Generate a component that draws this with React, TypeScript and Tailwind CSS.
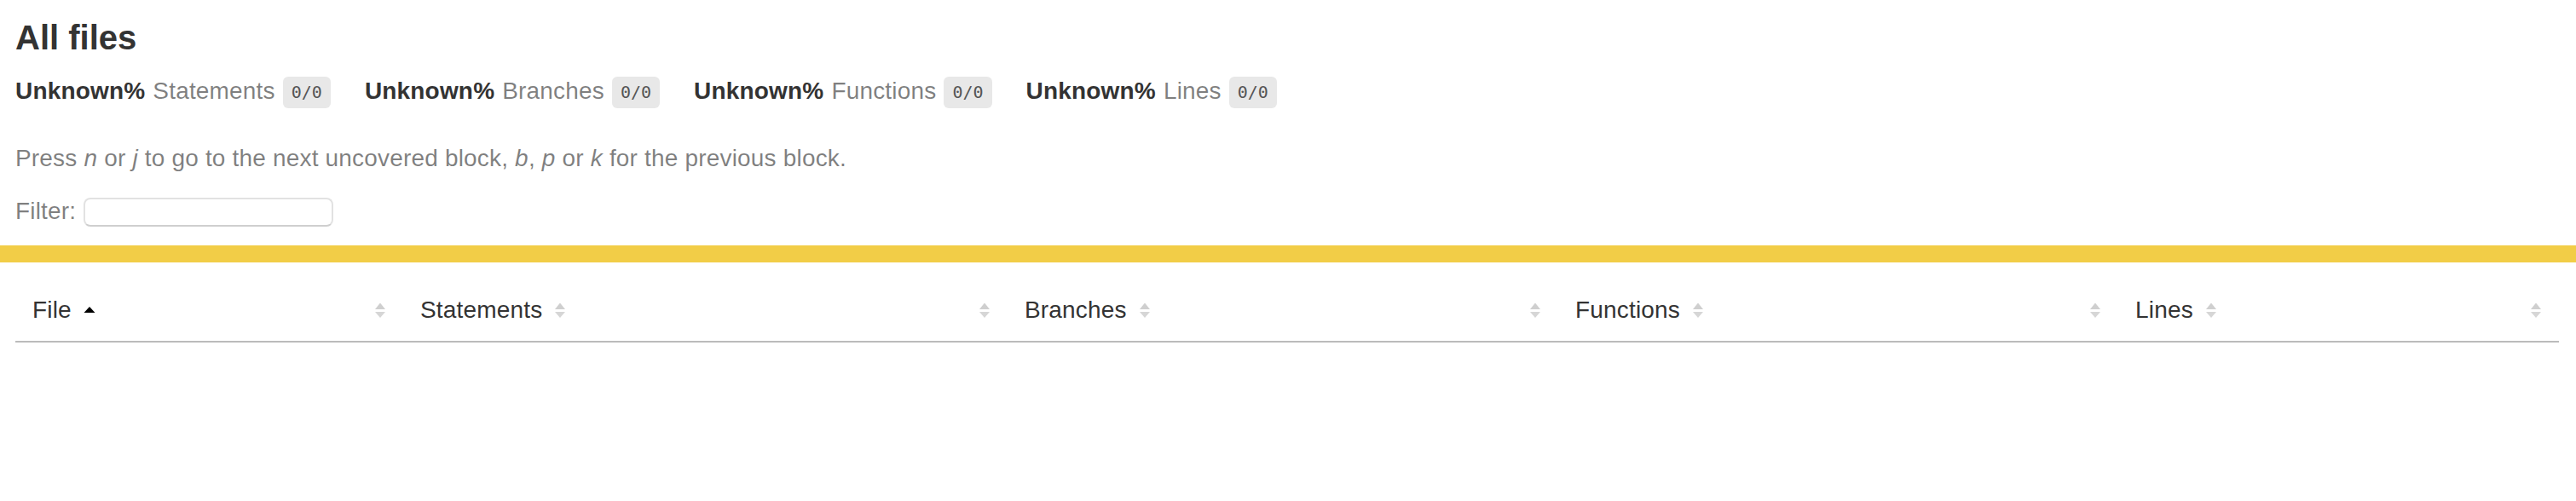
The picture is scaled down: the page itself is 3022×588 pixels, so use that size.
import React from "react"

const stats = [
  { label: "Statements", raw: "0/0" },
  { label: "Branches", raw: "0/0" },
  { label: "Functions", raw: "0/0" },
  { label: "Lines", raw: "0/0" },
]

const columns = [
  { label: "File", active: true },
  { label: "Statements" },
  { label: "Branches" },
  { label: "Functions" },
  { label: "Lines" },
]

function Sorter({ active = false, className = "" }: { active?: boolean; className?: string }) {
  return (
    <svg width="14" height="20" viewBox="0 0 14 20" className={"shrink-0 " + className}>
      {active ? (
        <polygon points="7,6 13.5,13 0.5,13" fill="#000" />
      ) : (
        <>
          <polygon points="7,1.5 13,9 1,9" fill="#cfcfcf" />
          <polygon points="1,12 13,12 7,19" fill="#d6d6d6" />
        </>
      )}
    </svg>
  )
}

export default function App() {
  return (
    <div className="min-h-screen bg-white text-[#333] tracking-[0.18px] font-['Liberation_Sans',Arial,sans-serif]">
      <div className="px-[18px]">
        <h1 className="pt-[20px] text-[40px] leading-[48px] font-bold tracking-normal">All files</h1>

        <div className="mt-[19px] flex gap-[40px]">
          {stats.map((s) => (
            <div key={s.label} className="flex items-start gap-[9px] text-[28px] leading-[40px]">
              <span className="font-bold">Unknown%</span>
              <span className="text-black/50">{s.label}</span>
              <span className="mt-[3px] h-[37px] rounded-[6px] bg-[#e8e8e8] px-[10px] text-[20px] leading-[37px] tracking-normal text-[#555] font-['DejaVu_Sans_Mono',monospace]">
                {s.raw}
              </span>
            </div>
          ))}
        </div>

        <p className="mt-[39px] text-[28px] leading-[40px] text-black/50">
          Press <em>n</em> or <em>j</em> to go to the next uncovered block, <em>b</em>, <em>p</em> or <em>k</em> for the
          previous block.
        </p>

        <div className="mt-[22px] flex items-end gap-[9px] text-[28px] leading-[40px] text-black/50">
          <span>Filter:</span>
          <input
            type="search"
            className="mb-[2px] h-[34px] w-[293px] rounded-[8px] border-2 border-[#e2e2e2] border-b-[#cfcfcf] bg-white outline-none"
          />
        </div>
      </div>

      <div className="mt-[20px] h-[20px] bg-[#f2cd47]" />

      <div className="px-[18px] pr-[20px] pt-[40px]">
        <div className="grid grid-cols-[455px_709px_646px_657px_1fr] border-b-2 border-[#bbb] pb-[19px]">
          {columns.map((c) => (
            <div key={c.label} className="flex items-end justify-between px-[20px]">
              <div className="flex items-end">
                <span className="text-[28px] leading-[32px] pb-[1px]">{c.label}</span>
                <Sorter active={c.active} className="ml-[14px] mb-[7px]" />
              </div>
              <Sorter className="mb-[7px]" />
            </div>
          ))}
        </div>
      </div>
    </div>
  )
}
